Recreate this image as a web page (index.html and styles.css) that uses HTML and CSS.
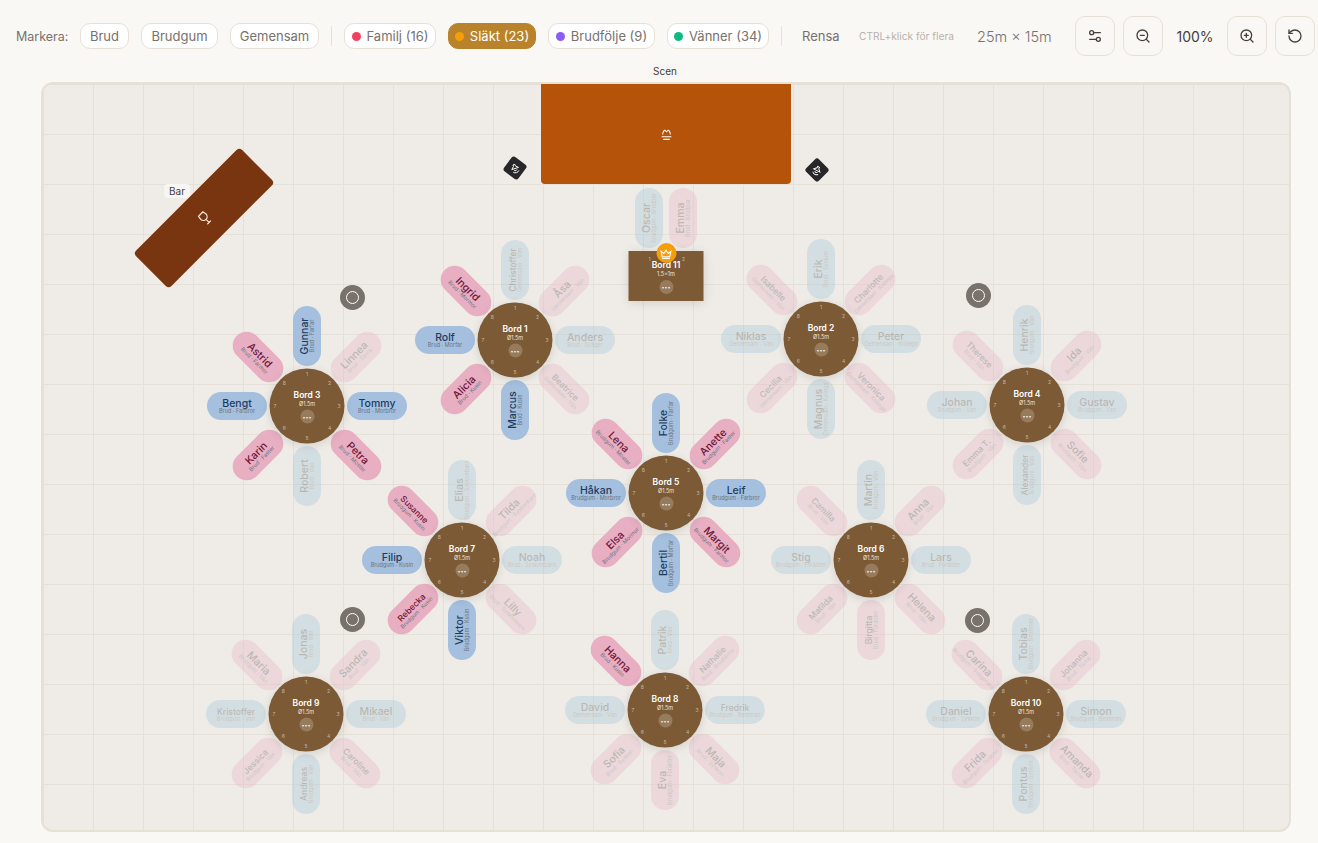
FILE: index.html

```html
<!DOCTYPE html>
<html lang="sv">
<head>
  <meta charset="UTF-8">
  <meta name="viewport" content="width=device-width, initial-scale=1.0">
  <title>Bordsplacering</title>
  <link rel="stylesheet" href="styles.css">
</head>
<body>
  <header class="toolbar">
    <span class="toolbar-label">Markera:</span>
    <button class="chip chip-brud">Brud</button>
    <button class="chip chip-brudgum">Brudgum</button>
    <button class="chip chip-gemensam">Gemensam</button>
    <span class="divider"></span>
    <button class="chip chip-familj"><i class="dot dot-familj"></i>Familj (16)</button>
    <button class="chip chip-slakt active"><i class="dot dot-slakt"></i>Släkt (23)</button>
    <button class="chip chip-foljet"><i class="dot dot-foljet"></i>Brudfölje (9)</button>
    <button class="chip chip-vanner"><i class="dot dot-vanner"></i>Vänner (34)</button>
    <span class="divider"></span>
    <button class="clear">Rensa</button>
    <span class="hint">CTRL+klick för flera</span>
    <span class="room-size">25m × 15m</span>
    <div class="view-controls">
      <button class="icon-btn" aria-label="Inställningar">
        <svg viewBox="0 0 24 24"><path d="M14 17H4M20 7H10"/><circle cx="7" cy="7" r="3"/><circle cx="17" cy="17" r="3"/></svg>
      </button>
      <button class="icon-btn" aria-label="Zooma ut">
        <svg viewBox="0 0 24 24"><circle cx="11" cy="11" r="8"/><path d="m21 21-4.3-4.3M8 11h6"/></svg>
      </button>
      <span class="zoom-value">100%</span>
      <button class="icon-btn" aria-label="Zooma in">
        <svg viewBox="0 0 24 24"><circle cx="11" cy="11" r="8"/><path d="m21 21-4.3-4.3M11 8v6M8 11h6"/></svg>
      </button>
      <button class="icon-btn" aria-label="Återställ">
        <svg viewBox="0 0 24 24"><path d="M3 12a9 9 0 1 0 9-9 9.75 9.75 0 0 0-6.74 2.74L3 8"/><path d="M3 3v5h5"/></svg>
      </button>
    </div>
  </header>

  <main class="floor" id="floor">
    <span class="tag tag-stage">Scen</span>
    <div class="stage">
      <svg viewBox="0 0 24 24"><path d="M5 12C5 7 8 4 9 4l3 3 3-3c1 0 4 3 4 8"/><path d="M3 16h18M6 21h12"/></svg>
    </div>

    <span class="tag tag-bar">Bar</span>
    <div class="bar">
      <svg viewBox="0 0 24 24"><path d="M8 22h8M12 15v7M17 3H7l-1 6a6 6 0 0 0 12 0z"/></svg>
    </div>

    <div class="speaker speaker-left">
      <svg viewBox="0 0 24 24"><path d="M5 10v4h3l5 5V5L8 10zM16 9a4 4 0 0 1 0 6M19 6a8 8 0 0 1 0 12"/></svg>
    </div>
    <div class="speaker speaker-right">
      <svg viewBox="0 0 24 24"><path d="M5 10v4h3l5 5V5L8 10zM16 9a4 4 0 0 1 0 6M19 6a8 8 0 0 1 0 12"/></svg>
    </div>

    <div class="pillar pillar-a"></div>
    <div class="pillar pillar-b"></div>
    <div class="pillar pillar-c"></div>
    <div class="pillar pillar-d"></div>
  </main>

  <script>
    // seats go clockwise from the top: name, role, m/f, lit
    const tables = [
      { name: 'Bord 1', x: 472, y: 256, seats: [
        ['Christoffer', 'Gemensam · Vän', 'm'], ['Åsa', 'Gemensam · Vän', 'f'], ['Anders', 'Brud · Svåger', 'm'], ['Beatrice', 'Gemensam · Vän', 'f'],
        ['Marcus', 'Brud · Kusin', 'm', 1], ['Alicia', 'Brud · Kusin', 'f', 1], ['Rolf', 'Brud · Morfar', 'm', 1], ['Ingrid', 'Brud · Mormor', 'f', 1]] },
      { name: 'Bord 2', x: 778, y: 255, seats: [
        ['Erik', 'Brud · Syskon', 'm'], ['Charlotte', 'Gemensam · Kollega', 'f'], ['Peter', 'Gemensam · Kollega', 'm'], ['Veronica', 'Gemensam · Kollega', 'f'],
        ['Magnus', 'Gemensam · Kollega', 'm'], ['Cecilia', 'Gemensam · Vän', 'f'], ['Niklas', 'Gemensam · Vän', 'm'], ['Isabelle', 'Gemensam · Vän', 'f']] },
      { name: 'Bord 3', x: 264, y: 322, seats: [
        ['Gunnar', 'Brud · Farfar', 'm', 1], ['Linnea', 'Brud · Tärna', 'f'], ['Tommy', 'Brud · Morbror', 'm', 1], ['Petra', 'Brud · Moster', 'f', 1],
        ['Robert', 'Brud · Vän', 'm'], ['Karin', 'Brud · Faster', 'f', 1], ['Bengt', 'Brud · Farbror', 'm', 1], ['Astrid', 'Brud · Farmor', 'f', 1]] },
      { name: 'Bord 4', x: 984, y: 321, seats: [
        ['Henrik', 'Brudgum · Vän', 'm'], ['Ida', 'Brudgum · Vän', 'f'], ['Gustav', 'Brudgum · Vän', 'm'], ['Sofie', 'Brudgum · Vän', 'f'],
        ['Alexander', 'Brudgum · Vän', 'm'], ['Emma T.', 'Brudgum · Vän', 'f'], ['Johan', 'Brudgum · Vän', 'm'], ['Therese', 'Brud · Vän', 'f']] },
      { name: 'Bord 5', x: 623, y: 409, seats: [
        ['Folke', 'Brudgum · Farfar', 'm', 1], ['Anette', 'Brudgum · Faster', 'f', 1], ['Leif', 'Brudgum · Farbror', 'm', 1], ['Margit', 'Brudgum · Farmor', 'f', 1],
        ['Bertil', 'Brudgum · Morfar', 'm', 1], ['Elsa', 'Brudgum · Mormor', 'f', 1], ['Håkan', 'Brudgum · Morbror', 'm', 1], ['Lena', 'Brudgum · Moster', 'f', 1]] },
      { name: 'Bord 6', x: 828, y: 476, seats: [
        ['Martin', 'Brudgum · Vän', 'm'], ['Anna', 'Brud · Vän', 'f'], ['Lars', 'Brud · Förälder', 'm'], ['Helena', 'Brud · Vän', 'f'],
        ['Birgitta', 'Brud · Förälder', 'f'], ['Matilda', 'Brud · Vän', 'f'], ['Stig', 'Brudgum · Förälder', 'm'], ['Camilla', 'Brud · Vän', 'f']] },
      { name: 'Bord 7', x: 419, y: 476, seats: [
        ['Elias', 'Brudgum · Syskonbarn', 'm'], ['Tilda', 'Brudgum · Syskonbarn', 'f'], ['Noah', 'Brud · Syskonbarn', 'm'], ['Lilly', 'Brud · Syskonbarn', 'f'],
        ['Viktor', 'Brudgum · Kusin', 'm', 1], ['Rebecka', 'Brudgum · Kusin', 'f', 1], ['Filip', 'Brudgum · Kusin', 'm', 1], ['Susanne', 'Brudgum · Kusin', 'f', 1]] },
      { name: 'Bord 8', x: 622, y: 626, seats: [
        ['Patrik', 'Brud · Vän', 'm'], ['Nathalie', 'Brud · Brudtärna', 'f'], ['Fredrik', 'Brudgum · Bestman', 'm'], ['Maja', 'Brud · Syskon', 'f'],
        ['Eva', 'Brudgum · Förälder', 'f'], ['Sofia', 'Brud · Syskon', 'f'], ['David', 'Gemensam · Vän', 'm'], ['Hanna', 'Brud · Kusin', 'f', 1]] },
      { name: 'Bord 9', x: 263, y: 630, seats: [
        ['Jonas', 'Brud · Vän', 'm'], ['Sandra', 'Brud · Vän', 'f'], ['Mikael', 'Brud · Vän', 'm'], ['Caroline', 'Brud · Vän', 'f'],
        ['Andreas', 'Brudgum · Vän', 'm'], ['Jessica', 'Brudgum · Vän', 'f'], ['Kristoffer', 'Brudgum · Vän', 'm'], ['Maria', 'Brudgum · Vän', 'f']] },
      { name: 'Bord 10', x: 983, y: 630, seats: [
        ['Tobias', 'Brudgum · Bestman', 'm'], ['Johanna', 'Brud · Tärna', 'f'], ['Simon', 'Brudgum · Bestman', 'm'], ['Amanda', 'Brud · Tärna', 'f'],
        ['Pontus', 'Brudgum · Syskon', 'm'], ['Frida', 'Brudgum · Syskon', 'f'], ['Daniel', 'Brudgum · Syskon', 'm'], ['Carina', 'Brudgum · Svägerska', 'f']] }
    ];

    const floor = document.getElementById('floor');
    const seatTurn = [-90, -45, 0, 45, -90, -45, 0, 45];

    function addSeat(seat, x, y, turn) {
      const [name, role, kind, lit] = seat;
      const el = document.createElement('div');
      el.className = `seat seat-${kind}` + (lit ? '' : ' dim');
      el.style.left = `${x}px`;
      el.style.top = `${y}px`;
      el.style.transform = `translate(-50%, -50%) rotate(${turn}deg)`;
      const small = name.length >= 7 ? ' small' : '';
      el.innerHTML = `<span class="seat-name${small}">${name}</span><span class="seat-role">${role}</span>`;
      floor.appendChild(el);
    }

    function tableText(name, size) {
      return `<span class="table-name">${name}</span><span class="table-size">${size}</span><span class="table-menu">···</span>`;
    }

    function addNumber(parent, n, x, y) {
      const el = document.createElement('span');
      el.className = 'seat-no';
      el.textContent = n;
      el.style.left = `${x}px`;
      el.style.top = `${y}px`;
      parent.appendChild(el);
    }

    tables.forEach(t => {
      t.seats.forEach((seat, i) => {
        const a = i * Math.PI / 4;
        addSeat(seat, t.x + Math.sin(a) * 70, t.y - Math.cos(a) * 70, seatTurn[i]);
      });
      const el = document.createElement('div');
      el.className = 'table round';
      el.style.left = `${t.x}px`;
      el.style.top = `${t.y}px`;
      el.innerHTML = tableText(t.name, 'Ø1.5m');
      for (let n = 0; n < 8; n++) {
        const a = n * Math.PI / 4;
        addNumber(el, n + 1, 37.5 + Math.sin(a) * 32, 37.5 - Math.cos(a) * 32);
      }
      floor.appendChild(el);
    });

    // the head table is the only square one
    addSeat(['Oscar', 'Brudgum · Brudpar', 'm'], 606, 134, -90);
    addSeat(['Emma', 'Brud · Brudpar', 'f'], 640, 134, -90);
    const head = document.createElement('div');
    head.className = 'table head';
    head.style.left = '623px';
    head.style.top = '192px';
    head.innerHTML = tableText('Bord 11', '1.5×1m') +
      '<span class="crown"><svg viewBox="0 0 24 24"><path d="M12 6l4 6 5-4-2 10H5L3 8l5 4z"/><path d="M5 21h14"/></svg></span>';
    addNumber(head, 1, 21, 8);
    addNumber(head, 2, 55, 8);
    floor.appendChild(head);
  </script>
</body>
</html>
```

FILE: styles.css

```css
* {
  box-sizing: border-box;
}
body {
  margin: 0;
  height: 843px;
  overflow: hidden;
  background-color: #faf8f5;
  font-family: Inter, "Liberation Sans", sans-serif;
  color: #78716c;
}
button {
  font-family: inherit;
  cursor: pointer;
}

/* toolbar */
.toolbar {
  display: flex;
  align-items: center;
  height: 72px;
  padding: 0 3px 0 16px;
  margin-bottom: 10px;
}
.toolbar-label {
  font-size: 12.5px;
  width: 64px;
}
.chip {
  display: flex;
  align-items: center;
  justify-content: center;
  gap: 6px;
  height: 26px;
  padding: 0;
  margin-right: 12px;
  font-size: 13px;
  color: #78716c;
  background-color: #fff;
  border: 1px solid #e7e0d6;
  border-radius: 10px;
}
.chip-brud { width: 49px; }
.chip-brudgum { width: 77px; }
.chip-gemensam { width: 89px; }
.chip-familj { width: 92px; }
.chip-slakt { width: 88px; }
.chip-foljet { width: 107px; }
.chip-vanner { width: 102px; margin-right: 12px; }
.chip.active {
  color: #fff;
  background-color: #b9832b;
  border-color: #b9832b;
}
.dot {
  width: 9px;
  height: 9px;
  border-radius: 50%;
}
.dot-familj { background-color: #f43f5e; }
.dot-slakt { background-color: #f59e0b; }
.dot-foljet { background-color: #8b5cf6; }
.dot-vanner { background-color: #10b981; }
.divider {
  width: 1px;
  height: 20px;
  margin-right: 12px;
  background-color: #e7e0d6;
}
.clear {
  width: 37px;
  margin: 0 20px 0 8px;
  padding: 0;
  font-size: 13px;
  white-space: nowrap;
  color: #78716c;
  background: none;
  border: 0;
}
.hint {
  width: 96px;
  margin-right: 22px;
  font-size: 10.2px;
  white-space: nowrap;
  color: #b8b2aa;
}
.room-size {
  width: 75px;
  font-size: 14.5px;
  font-weight: 300;
  white-space: nowrap;
}
.view-controls {
  display: flex;
  align-items: center;
  gap: 8px;
  margin-left: auto;
}
.icon-btn {
  display: flex;
  align-items: center;
  justify-content: center;
  width: 40px;
  height: 40px;
  padding: 0;
  background-color: #faf8f5;
  border: 1px solid #e7e0d6;
  border-radius: 10px;
}
.icon-btn svg {
  width: 16px;
  height: 16px;
  fill: none;
  stroke: #44403c;
  stroke-width: 2;
  stroke-linecap: round;
  stroke-linejoin: round;
}
.zoom-value {
  width: 48px;
  font-size: 14px;
  text-align: center;
  color: #44403c;
}

/* floor plan */
.floor {
  position: relative;
  width: 1250px;
  height: 750px;
  margin-left: 41px;
  background-color: #efece7;
  background-image:
    linear-gradient(#e6e1d8 1px, transparent 1px),
    linear-gradient(90deg, #e6e1d8 1px, transparent 1px);
  background-size: 50px 50px;
  border: 2px solid #e6e0d5;
  border-radius: 12px;
}
.tag {
  position: absolute;
  padding: 1px 5px;
  font-size: 10px;
  color: #44403c;
  background-color: #f8f6f3;
  border-radius: 4px;
}
.tag-stage {
  left: 605px;
  top: -20px;
}
.tag-bar {
  left: 121px;
  top: 100px;
}
.stage {
  position: absolute;
  left: 498px;
  top: 0;
  display: flex;
  align-items: center;
  justify-content: center;
  width: 250px;
  height: 100px;
  background-color: #b45309;
  border-radius: 0 0 4px 4px;
}
.stage svg {
  width: 13px;
  height: 13px;
  fill: none;
  stroke: #fff;
  stroke-width: 2;
}
.bar {
  position: absolute;
  left: 86px;
  top: 109px;
  display: flex;
  align-items: center;
  justify-content: center;
  width: 150px;
  height: 50px;
  background-color: #78350f;
  border-radius: 4px;
  transform: rotate(-45deg);
}
.bar svg {
  width: 15px;
  height: 15px;
  fill: none;
  stroke: #f5e6d8;
  stroke-width: 2;
}
.speaker {
  position: absolute;
  display: flex;
  align-items: center;
  justify-content: center;
  width: 18px;
  height: 18px;
  background-color: #27272a;
  border-radius: 3px;
}
.speaker svg {
  width: 12px;
  height: 12px;
  fill: none;
  stroke: #fff;
  stroke-width: 1.8;
}
.speaker-left {
  left: 463px;
  top: 75px;
  transform: rotate(37deg);
}
.speaker-left svg { transform: rotate(35deg); }
.speaker-right {
  left: 765px;
  top: 77px;
  transform: rotate(45deg);
}
.speaker-right svg { transform: rotate(72deg); }
.pillar {
  position: absolute;
  width: 25px;
  height: 25px;
  background-color: #78716c;
  border-radius: 50%;
}
.pillar::after {
  content: "";
  position: absolute;
  inset: 6px;
  border: 1.5px solid #fff;
  border-radius: 50%;
}
.pillar-a { left: 297px; top: 201px; }
.pillar-b { left: 923px; top: 199px; }
.pillar-c { left: 297px; top: 523px; }
.pillar-d { left: 922px; top: 524px; }

/* seats */
.seat {
  position: absolute;
  display: flex;
  flex-direction: column;
  align-items: center;
  justify-content: center;
  width: 60px;
  height: 28px;
  border-radius: 14px;
  padding-top: 2px;
  white-space: nowrap;
}
.seat-m {
  color: #1e3a5f;
  background-color: #a4c0de;
}
.seat-f {
  color: #6d1538;
  background-color: #e8afc3;
}
.seat.dim {
  opacity: 0.3;
}
.seat-m.dim {
  background-color: #96c1d9;
}
.seat-f.dim {
  background-color: #e6aac1;
}
.seat.dim .seat-name {
  color: #44403c;
}
.seat.dim .seat-role {
  color: #78716c;
}
.seat-name {
  font-size: 10.5px;
  font-weight: 500;
  line-height: 8px;
}
.seat-name.small {
  font-size: 8.5px;
}
.seat-role {
  font-size: 5.5px;
  line-height: 6px;
  color: #6b7280;
}

/* tables */
.table {
  position: absolute;
  display: flex;
  flex-direction: column;
  align-items: center;
  color: #fff;
  background-color: #7c5a35;
  box-shadow: 0 2px 10px rgba(0, 0, 0, 0.12);
  transform: translate(-50%, -50%);
}
.table.round {
  width: 75px;
  height: 75px;
  padding-top: 21px;
  border-radius: 50%;
}
.table.head {
  width: 75px;
  height: 50px;
  padding-top: 9px;
}
.table-name {
  font-size: 8.5px;
  font-weight: 600;
  line-height: 11px;
}
.table-size {
  font-size: 5.5px;
  line-height: 7px;
  color: #f0e6d8;
}
.table-menu {
  display: flex;
  align-items: center;
  justify-content: center;
  width: 14px;
  height: 14px;
  margin-top: 2px;
  font-size: 9px;
  font-weight: 700;
  line-height: 1;
  background-color: rgba(255, 255, 255, 0.2);
  border-radius: 50%;
}
.seat-no {
  position: absolute;
  font-size: 5px;
  line-height: 1;
  color: rgba(255, 255, 255, 0.55);
  transform: translate(-50%, -50%);
}
.crown {
  position: absolute;
  left: 27.5px;
  top: -8px;
  display: flex;
  align-items: center;
  justify-content: center;
  width: 20px;
  height: 20px;
  background-color: #f59e0b;
  border-radius: 50%;
}
.crown svg {
  width: 13px;
  height: 13px;
  fill: none;
  stroke: #fff;
  stroke-width: 2;
}
```
